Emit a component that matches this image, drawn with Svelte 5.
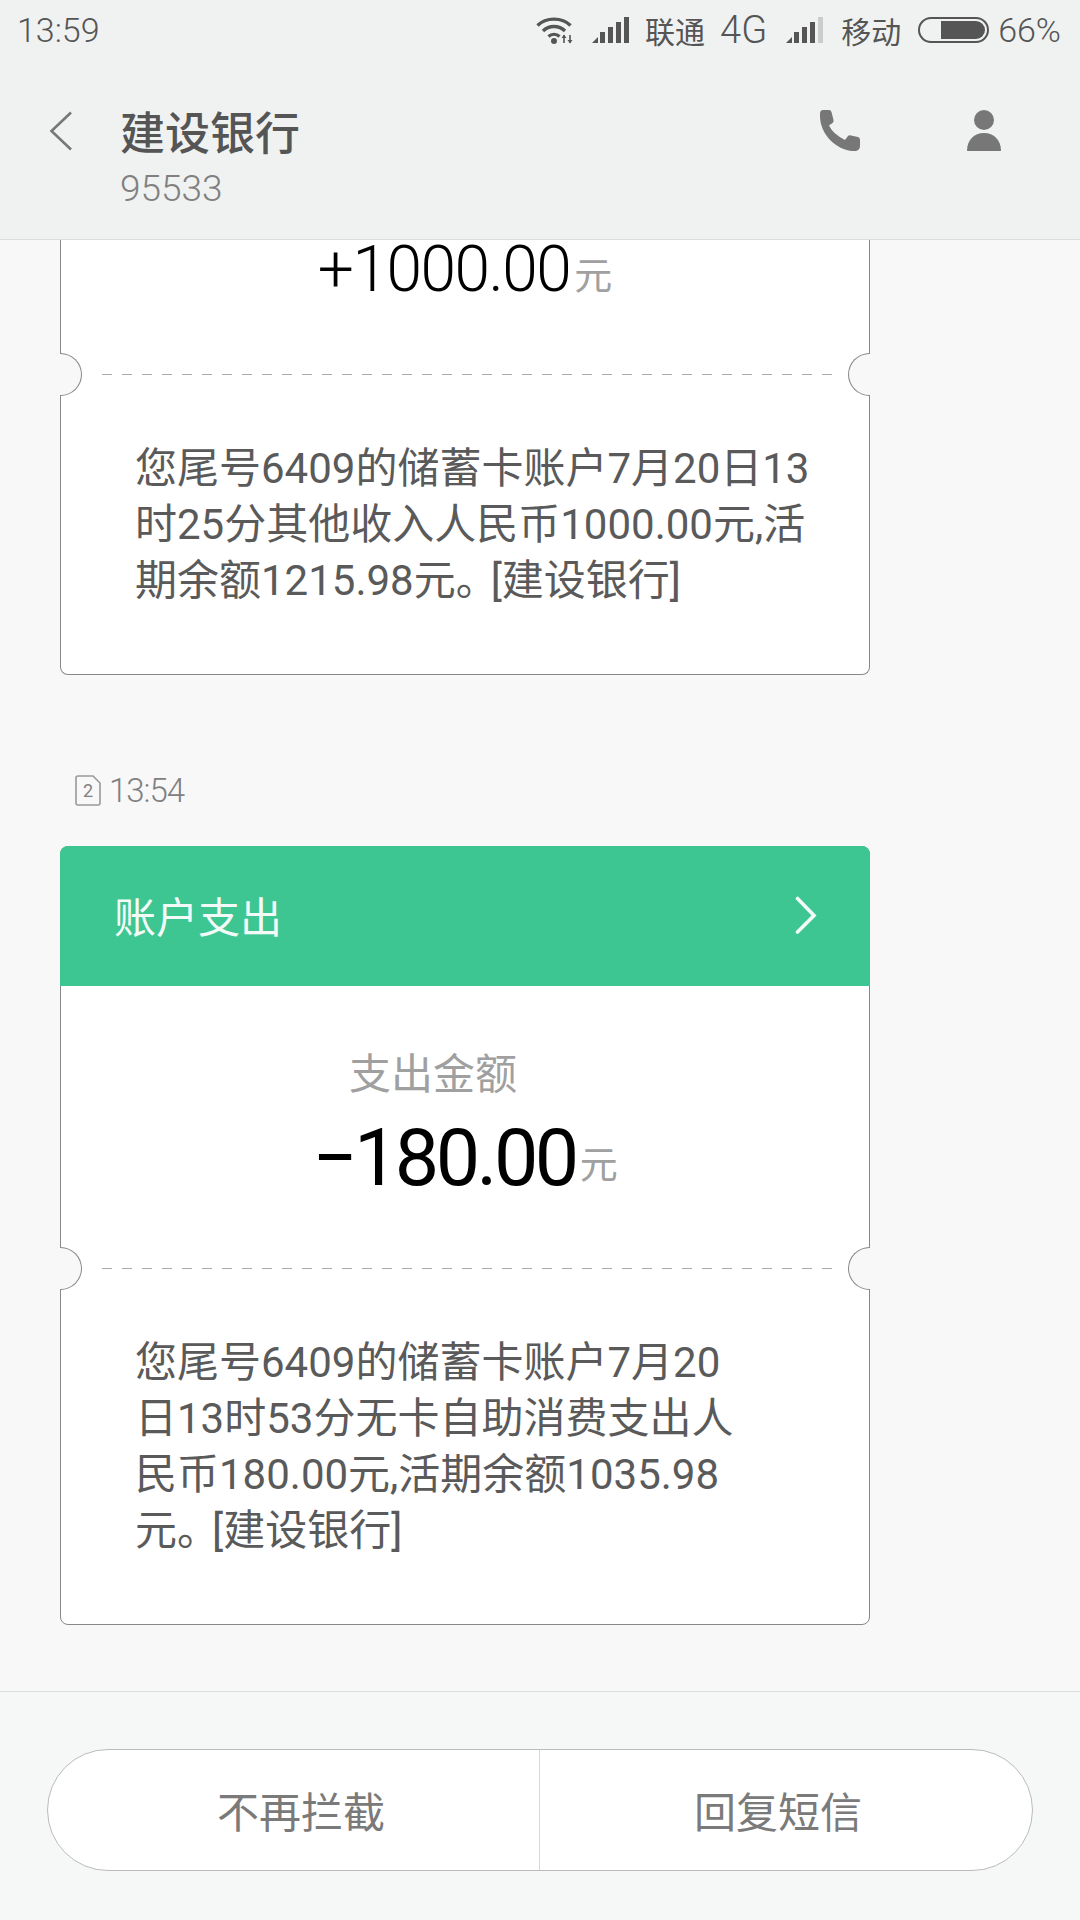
<script>
  const topLines = [
    '您尾号6409的储蓄卡账户7月20日13',
    '时25分其他收入人民币1000.00元,活',
    '期余额1215.98元。[建设银行]',
  ];
  const bottomLines = [
    '您尾号6409的储蓄卡账户7月20',
    '日13时53分无卡自助消费支出人',
    '民币180.00元,活期余额1035.98',
    '元。[建设银行]',
  ];
</script>

{#snippet message(lines)}
  <div class="body">
    {#each lines as line}
      <div class="line">
        {#each line.split('。') as part, i}{#if i}<span class="stop">。</span>{/if}{part}{/each}
      </div>
    {/each}
  </div>
{/snippet}

{#snippet tear()}
  <div class="tear">
    <span class="notch left"></span>
    <span class="dash"></span>
    <span class="notch right"></span>
  </div>
{/snippet}

<div class="screen">
  <header class="header">
    <div class="status">
      <span class="clock">13:59</span>
      <div class="status-right">
        <svg class="wifi" width="38" height="28" viewBox="0 0 38 28">
          <path d="M1.5 9.5C10 1 26 1 34.5 9.5" fill="none" stroke="#555" stroke-width="3.4" />
          <path d="M7 15C13 9 23 9 29 15" fill="none" stroke="#555" stroke-width="3.4" />
          <path d="M12.5 20.5C15.5 17.5 20.5 17.5 23.5 20.5" fill="none" stroke="#555" stroke-width="3.2" />
          <circle cx="18" cy="25" r="3" fill="#555" />
          <path d="M28 27V19M34 27V19" stroke="#555" stroke-width="1.6" />
          <path d="M25.5 22L28 18.5L30.5 22M31.5 24L34 27.5L36.5 24" fill="#555" />
        </svg>
        <svg class="signal one" width="37" height="26" viewBox="0 0 37 26">
          <path d="M0 26L6 20V26Z" fill="#555" />
          <rect x="8" y="15" width="5" height="11" fill="#555" />
          <rect x="16" y="10" width="5" height="16" fill="#555" />
          <rect x="24" y="5" width="5" height="21" fill="#555" />
          <rect x="32" y="0" width="5" height="26" fill="#555" />
        </svg>
        <span class="carrier first">联通</span>
        <span class="carrier net">4G</span>
        <svg class="signal two" width="37" height="26" viewBox="0 0 37 26">
          <path d="M0 26L6 20V26Z" fill="#555" />
          <rect x="8" y="15" width="5" height="11" fill="#555" />
          <rect x="16" y="10" width="5" height="16" fill="#555" />
          <rect x="24" y="5" width="5" height="21" fill="#555" />
          <rect x="32" y="0" width="5" height="26" fill="#ccc" />
        </svg>
        <span class="carrier second">移动</span>
        <div class="battery"><div class="battery-fill"></div></div>
        <span class="percent">66%</span>
      </div>
    </div>
    <div class="titlebar">
      <svg class="back" width="24" height="40" viewBox="0 0 24 40">
        <path d="M22 1.5L2.5 20L22 38.5" fill="none" stroke="#777" stroke-width="2.6" />
      </svg>
      <div class="title-block">
        <div class="title">建设银行</div>
        <div class="number">95533</div>
      </div>
      <svg class="phone" width="41" height="42" viewBox="0 0 41 42">
        <path d="M3 0H9Q11 0 11.5 2L13.5 10Q14 12 12.5 13L9 15.5Q13 24 25 30L28 26Q29 25 31 25.5L38 27Q40 27.5 40 30V36Q40 40 36 41H33C16 40 0 24 0 6V4Q0 0 3 0Z" fill="#777" />
      </svg>
      <svg class="person" width="36" height="42" viewBox="0 0 36 42">
        <circle cx="18" cy="10" r="10" fill="#777" />
        <path d="M1 41C1 30 8 23 18 23C28 23 35 30 35 41Z" fill="#777" />
      </svg>
    </div>
  </header>

  <main class="list">
    <section class="card clipped">
      <div class="amount-box first-box">
        <div class="amount"><span class="figure small">+1000.00</span><span class="unit">元</span></div>
      </div>
      {@render tear()}
      {@render message(topLines)}
    </section>

    <div class="meta">
      <svg width="26" height="31" viewBox="0 0 26 31">
        <path d="M3 1H18L25 8V28A2 2 0 0 1 23 30H3A2 2 0 0 1 1 28V3A2 2 0 0 1 3 1Z" fill="none" stroke="#999" stroke-width="1.6" />
        <text x="13" y="22" text-anchor="middle" class="sim-num">2</text>
      </svg>
      <span class="time">13:54</span>
    </div>

    <section class="card">
      <div class="card-head">
        <span class="head-text">账户支出</span>
        <svg width="22" height="40" viewBox="0 0 22 40">
          <path d="M2.5 2.5L19 19.5L2.5 36" fill="none" stroke="#f2fbf7" stroke-width="3.6" stroke-linecap="round" />
        </svg>
      </div>
      <div class="amount-box">
        <div class="amount-label">支出金额</div>
        <div class="amount"><span class="figure">−180.00</span><span class="unit">元</span></div>
      </div>
      {@render tear()}
      {@render message(bottomLines)}
    </section>
  </main>

  <footer class="footer">
    <div class="actions">
      <button type="button" class="block">不再拦截</button>
      <button type="button" class="reply">回复短信</button>
    </div>
  </footer>
</div>

<style>
  :global(body) {
    margin: 0;
    background: #f8f8f8;
  }

  .screen {
    width: 1080px;
    height: 1920px;
    display: flex;
    flex-direction: column;
    overflow: hidden;
    font-family: Roboto, 'Noto Sans CJK SC', sans-serif;
    color: #555;
    background: #f8f8f8;
  }

  .header {
    height: 239px;
    flex-shrink: 0;
    background: #f0f2f2;
    border-bottom: 1px solid #dcdddd;
  }

  .status {
    height: 60px;
    display: flex;
    align-items: center;
    justify-content: space-between;
    padding: 0 19px 0 17px;
  }

  .clock {
    font-size: 34px;
    font-weight: 300;
  }

  .status-right {
    display: flex;
    align-items: center;
  }

  .signal.one {
    margin-left: 18px;
  }

  .carrier {
    font-size: 30px;
  }

  .carrier.first {
    margin-left: 16px;
  }

  .carrier.net {
    margin-left: 15px;
    font-size: 38px;
    font-weight: 300;
  }

  .signal.two {
    margin-left: 19px;
  }

  .carrier.second {
    margin-left: 18px;
  }

  .battery {
    width: 71px;
    height: 26px;
    box-sizing: border-box;
    margin-left: 17px;
    border: 2px solid #555;
    border-radius: 13px;
    padding: 2px;
    display: flex;
    justify-content: flex-end;
  }

  .battery-fill {
    width: 44px;
    background: #555;
    border-radius: 0 9px 9px 0;
  }

  .percent {
    margin-left: 9px;
    font-size: 34px;
    font-weight: 300;
  }

  .titlebar {
    display: flex;
    align-items: flex-start;
    padding: 50px 0 0 49px;
  }

  .back {
    margin-top: 1px;
  }

  .title-block {
    margin-left: 47px;
    margin-top: -1px;
    flex: 1;
  }

  .title {
    font-size: 45px;
    line-height: 52px;
    font-weight: 500;
    color: #555;
  }

  .number {
    margin-top: 6px;
    font-size: 37px;
    line-height: 44px;
    font-weight: 300;
    color: #808080;
  }

  .person {
    margin: 0 78px 0 105px;
  }

  .list {
    flex: 1;
    min-height: 0;
    padding: 0 210px 0 60px;
  }

  .card {
    box-sizing: border-box;
    background: #fff;
    border: 1px solid #888;
    border-radius: 8px;
  }

  .card.clipped {
    border-top: none;
    border-radius: 0 0 8px 8px;
  }

  .card-head {
    height: 140px;
    margin: -1px -1px 0;
    padding: 0 53px 0 54px;
    display: flex;
    align-items: center;
    justify-content: space-between;
    background: #3dc692;
    border-radius: 8px 8px 0 0;
    font-size: 42px;
    color: #f2fbf7;
  }

  .head-text {
    padding-bottom: 4px;
  }

  .amount-box {
    height: 282px;
    box-sizing: border-box;
    padding-top: 60px;
    display: flex;
    flex-direction: column;
    align-items: center;
  }

  .amount-box.first-box {
    height: 134px;
    padding-top: 0;
  }

  .amount-box.first-box .amount {
    line-height: 60px;
    margin-top: 0;
  }

  .amount-label {
    margin-right: 64px;
    font-size: 42px;
    line-height: 58px;
    color: #a0a0a0;
  }

  .amount {
    margin-top: 9px;
    display: flex;
    align-items: baseline;
    line-height: 90px;
  }

  .figure {
    font-size: 79px;
    font-weight: 400;
    letter-spacing: -3.5px;
    color: #000;
  }

  .figure.small {
    font-size: 64px;
    font-weight: 300;
    letter-spacing: -1.5px;
  }

  .unit {
    align-self: flex-end;
    margin: 0 0 19px 4px;
    font-size: 38px;
    line-height: 1;
    color: #a0a0a0;
  }

  .first-box .unit {
    margin-bottom: 5px;
  }

  .tear {
    position: relative;
    height: 1px;
  }

  .dash {
    position: absolute;
    left: 41px;
    right: 36px;
    top: 0;
    height: 1px;
    background: repeating-linear-gradient(90deg, #aaa 0 10px, transparent 10px 20px);
  }

  .notch {
    position: absolute;
    top: -21px;
    width: 22px;
    height: 43px;
    box-sizing: border-box;
    background: #f8f8f8;
    border: 1px solid #888;
  }

  .notch.left {
    left: -1px;
    border-left: none;
    border-radius: 0 22px 22px 0;
  }

  .notch.right {
    right: -1px;
    border-right: none;
    border-radius: 22px 0 0 22px;
  }

  .body {
    padding: 66px 40px 65px 74px;
    font-size: 42px;
    line-height: 56px;
    font-weight: 400;
    color: #5a5a5a;
  }

  .line {
    white-space: nowrap;
  }

  .stop {
    letter-spacing: -7px;
  }

  .meta {
    height: 171px;
    box-sizing: border-box;
    padding: 100px 0 0 15px;
    display: flex;
    align-items: flex-start;
    gap: 8px;
  }

  .meta .time {
    font-size: 33px;
    line-height: 31px;
    font-weight: 300;
    letter-spacing: -1px;
    color: #808080;
  }

  .sim-num {
    font-size: 18px;
    fill: #808080;
  }

  .footer {
    height: 229px;
    flex-shrink: 0;
    box-sizing: border-box;
    padding: 57px 47px 0 47px;
    background: #f6f7f7;
    border-top: 1px solid #dcdddd;
  }

  .actions {
    height: 122px;
    box-sizing: border-box;
    display: flex;
    background: #fff;
    border: 1px solid #bbb;
    border-radius: 61px;
    overflow: hidden;
  }

  .actions button {
    border: 0;
    background: transparent;
    font-family: inherit;
    font-size: 42px;
    color: #7a7a7a;
    padding: 0 0 2px;
  }

  .actions button.block {
    flex: 0 0 491px;
    padding-left: 15px;
  }

  .actions button.reply {
    flex: 1;
    padding-right: 16px;
    border-left: 1px solid #d8d8d8;
  }
</style>
